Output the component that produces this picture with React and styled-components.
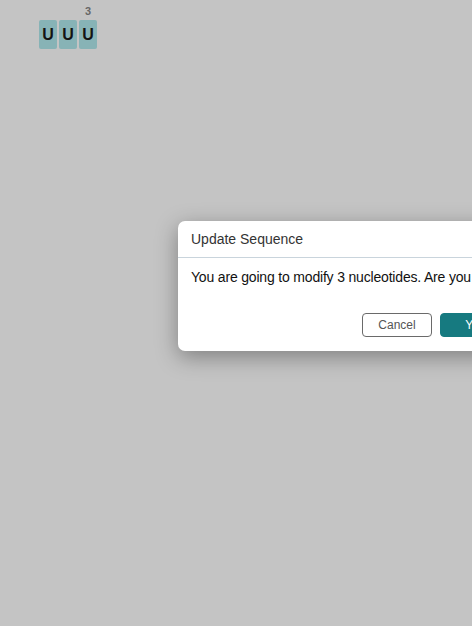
import React from 'react';
import styled, { createGlobalStyle } from 'styled-components';

const Global = createGlobalStyle`
  html, body {
    margin: 0;
    padding: 0;
    background: #c4c4c4;
    font-family: "Liberation Sans", Arial, sans-serif;
    overflow: hidden;
  }
`;

const Page = styled.div`
  width: 472px;
  height: 626px;
  position: relative;
  overflow: hidden;
`;

const Sequence = styled.div`
  display: flex;
  gap: 2px;
  padding: 20px 0 0 39px;
`;

const Tile = styled.div`
  position: relative;
  width: 18px;
  height: 29px;
  border-radius: 2px;
  background: #87b3b6;
  color: #141414;
  font-weight: bold;
  font-size: 16px;
  display: flex;
  align-items: center;
  justify-content: center;
`;

const Counter = styled.span`
  position: absolute;
  top: -15px;
  left: 0;
  right: 0;
  text-align: center;
  font-size: 11px;
  font-weight: bold;
  color: #676767;
`;

const Modal = styled.div`
  position: absolute;
  left: 178px;
  top: 221px;
  width: 344px;
  background: #fff;
  border-radius: 7px;
  box-shadow: 0 6px 22px rgba(0, 0, 0, 0.35);
  white-space: nowrap;
`;

const Header = styled.div`
  height: 36px;
  padding: 0 13px;
  display: flex;
  align-items: center;
  font-size: 14px;
  color: #333;
  border-bottom: 1px solid #c9d4dc;
`;

const Body = styled.div`
  padding: 10px 13px 0;
  font-size: 14px;
  line-height: 18px;
  letter-spacing: -0.18px;
  color: #111;
`;

const Footer = styled.div`
  display: flex;
  justify-content: flex-end;
  gap: 8px;
  padding: 27px 12px 14px;
`;

const Button = styled.button`
  width: 70px;
  height: 24px;
  border-radius: 4px;
  font-family: "Liberation Sans", Arial, sans-serif;
  font-size: 12px;
  cursor: pointer;
  border: 1px solid ${p => (p.primary ? '#167a80' : '#6a6a6a')};
  background: ${p => (p.primary ? '#167a80' : '#fff')};
  color: ${p => (p.primary ? '#fff' : '#555')};
`;

export default function App() {
  const seq = ['U', 'U', 'U'];
  return (
    <Page>
      <Global />
      <Sequence>
        {seq.map((n, i) => (
          <Tile key={i}>
            {i === seq.length - 1 && <Counter>{seq.length}</Counter>}
            {n}
          </Tile>
        ))}
      </Sequence>
      <Modal>
        <Header>Update Sequence</Header>
        <Body>You are going to modify 3 nucleotides. Are you sure?</Body>
        <Footer>
          <Button>Cancel</Button>
          <Button primary>Yes</Button>
        </Footer>
      </Modal>
    </Page>
  );
}
